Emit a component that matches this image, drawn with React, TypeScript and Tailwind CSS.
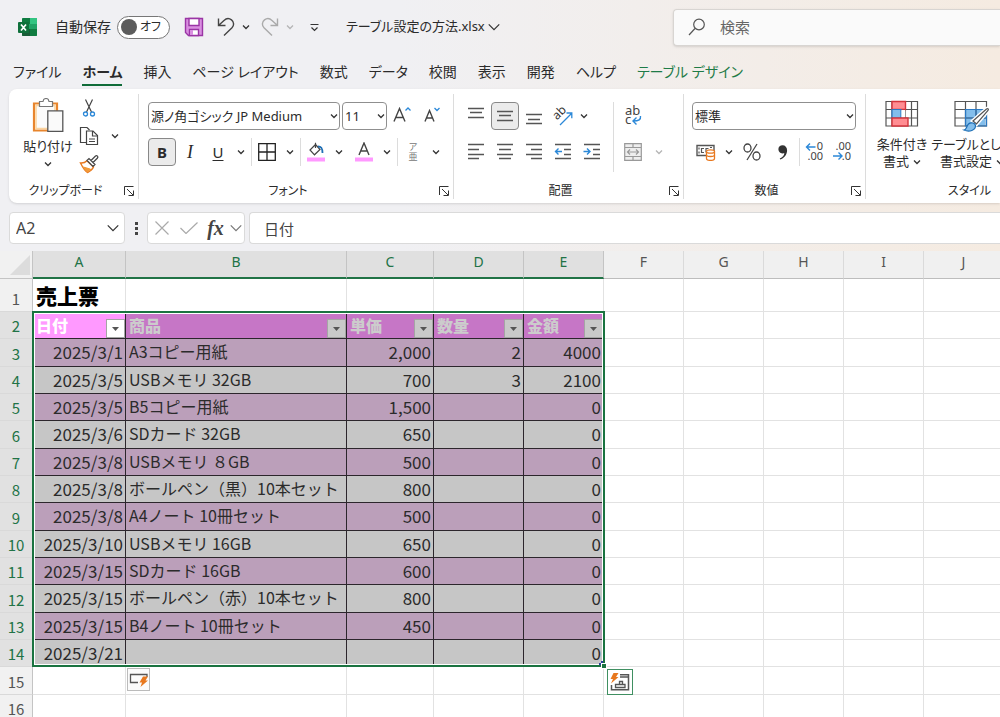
import React from "react";

type Kids = { children?: React.ReactNode };

function Chevron({ size = 8, className = "text-[#333]" }: { size?: number; className?: string }) {
  return (
    <svg width={size} height={size} viewBox="0 0 8 8" fill="none" className={className} aria-hidden="true">
      <path d="M1 2.5 4 5.5 7 2.5" stroke="currentColor" strokeWidth={size > 8 ? 0.7 : 1.3} />
    </svg>
  );
}

function IconButton({ label, className = "w-7", children }: Kids & { label: string; className?: string }) {
  return (
    <button type="button" aria-label={label} className={`flex h-7 shrink-0 items-center justify-center rounded ${className}`}>
      {children}
    </button>
  );
}

function MenuButton({ label, className = "w-[18px]", muted = false }: { label: string; className?: string; muted?: boolean }) {
  return (
    <IconButton label={label} className={className}>
      <Chevron className={muted ? "text-[#b5b5b5]" : "text-[#333]"} />
    </IconButton>
  );
}

function Separator({ className = "h-7" }: { className?: string }) {
  return <div className={`mx-px w-px shrink-0 bg-[#dcdcdc] ${className}`} />;
}

function Launcher({ label }: { label: string }) {
  return (
    <button type="button" aria-label={label} className="absolute right-1 bottom-0 flex h-4 w-2.5 items-center">
      <svg width="10" height="10" viewBox="0 0 10 10" fill="none" stroke="#333">
        <path d="M.5 9V.5H9.5M3 3l6 6M9.5 4.5v5h-5" />
      </svg>
    </button>
  );
}

function Group({ title, className, launcher = true, children }: Kids & { title: string; className: string; launcher?: boolean }) {
  return (
    <section aria-label={title} className={`flex shrink-0 flex-col border-r border-[#dcdcdc] ${className}`}>
      <div className="h-[89px]">{children}</div>
      <div className={`relative h-4 text-center text-xs leading-4 ${launcher ? "pr-4" : ""}`}>
        {title}
        {launcher && <Launcher label={`${title}の設定`} />}
      </div>
    </section>
  );
}

function Select({ label, value, className }: { label: string; value: string; className: string }) {
  return (
    <div className={`relative h-7 shrink-0 ${className}`}>
      <select aria-label={label} className="h-full w-full appearance-none rounded border border-[#8f8f8f] bg-white pr-4 pl-0.5 text-[13px] leading-5">
        <option>{value}</option>
      </select>
      <span className="pointer-events-none absolute inset-y-0 right-0.5 flex items-center">
        <Chevron />
      </span>
    </div>
  );
}

function Lines({ rows, children }: Kids & { rows: [number, number, number][] }) {
  return (
    <svg width="18" height="18" viewBox="0 0 18 18" fill="none" aria-hidden="true">
      {rows.map(([x1, x2, y]) => (
        <path key={y} d={`M${x1} ${y}.5H${x2}`} stroke="#555" strokeWidth="1.3" />
      ))}
      {children}
    </svg>
  );
}

function ExcelLogo() {
  return (
    <svg width="20" height="20" viewBox="0 0 20 20" aria-label="Excel" role="img">
      <rect x="4" y="1" width="15" height="18" rx="1" fill="#21a366" />
      <path d="M5 1h7v6H4V2z" fill="#107c41" />
      <path d="M12 1h6a1 1 0 0 1 1 1v5h-7z" fill="#33c481" />
      <path d="M12 12h7v6a1 1 0 0 1-1 1h-6z" fill="#107c41" />
      <path d="M4 12h8v7H5a1 1 0 0 1-1-1z" fill="#185c37" />
      <rect x="0" y="5" width="11" height="11" rx="1" fill="#0f703b" />
      <path d="M3 7.5l5 6M8 7.5l-5 6" stroke="#fff" strokeWidth="1.7" />
    </svg>
  );
}

function SaveIcon() {
  return (
    <svg width="20" height="20" viewBox="0 0 20 20" aria-hidden="true">
      <path d="M1.5 1.5h17v17h-14l-3-3z" fill="#d98fe0" stroke="#9a35a5" strokeWidth="1.4" />
      <path d="M5 1.5h10v7H5z" fill="#fff" stroke="#9a35a5" strokeWidth="1.4" />
      <path d="M5.500 18.500v-6h9v6z" fill="#fff" stroke="#9a35a5" strokeWidth="1.4" />
      <path d="M6 13h3v5H6z" fill="#d98fe0" />
    </svg>
  );
}

function UndoIcon() {
  return (
    <svg width="18" height="20" viewBox="0 0 18 20" fill="none" stroke="currentColor" strokeWidth="1.4" aria-hidden="true">
      <path d="M1.500 1.500v7h7M1.500 8.500 7 3.400C9.300 1.300 12.300 1.200 14.500 2.900c2.800 2.300 2.600 5.700.5 7.900L7 18.500" />
    </svg>
  );
}

function PasteIcon() {
  return (
    <svg width="32" height="34" viewBox="0 0 32 34" fill="none" aria-hidden="true">
      <path d="M2 5.500h23v27H2z" fill="#fff" stroke="#e8852d" strokeWidth="2.200" />
      <path d="M4 7.500h19v23H4z" fill="#fbfbfb" stroke="#fbd49e" strokeWidth="1.500" />
      <path d="M7.500 8.500v-5h3.500c.6-4 5.500-4 6 0h3.500v5z" fill="#fff" stroke="#777" strokeWidth="1.200" />
      <path d="M15.800 12.800h15v20.500h-15z" fill="#fafafa" stroke="#555" strokeWidth="1.300" />
    </svg>
  );
}

function CutIcon() {
  return (
    <svg width="14" height="20" viewBox="0 0 14 20" fill="none" aria-hidden="true">
      <path d="M3.500 1.500 9.500 14M10.500 1.500 4.500 14" stroke="#444" strokeWidth="1.200" />
      <circle cx="3.500" cy="16" r="2" stroke="#2b88d8" strokeWidth="1.300" />
      <circle cx="10.500" cy="16" r="2" stroke="#2b88d8" strokeWidth="1.300" />
    </svg>
  );
}

function CopyIcon() {
  return (
    <svg width="20" height="20" viewBox="0 0 20 20" fill="none" stroke="#444" strokeWidth="1.200" aria-hidden="true">
      <path d="M7 16.500H1.500v-15H8l2.500 2.500" />
      <path d="M7.500 5h6.500l4.500 4.500v9h-11z" fill="#fff" />
      <path d="M13.500 5v5h5M10 13h6M10 15.500h6" />
    </svg>
  );
}

function PainterIcon() {
  return (
    <svg width="20" height="20" viewBox="0 0 20 20" fill="none" aria-hidden="true">
      <path d="M1.500 9c3 .3 5-.8 6.500-2.300l6.500 6.300c-1 2.300-3 4-6 5.500C6 17 3.500 13 1.500 9z" fill="#fff" stroke="#e8781e" strokeWidth="1.400" />
      <path d="M3.500 12.500c4 1 6.500 1 9 3l-4 3C6.500 17 5 15 3.500 12.500z" fill="#f29a38" />
      <path d="M8 6.500 10 4.500l6 6-2 2zM12 6.500l4.500-4.500c1.500-1 3 .5 2 2L14 8.500" fill="#fff" stroke="#444" strokeWidth="1.200" />
    </svg>
  );
}

function BordersIcon() {
  return (
    <svg width="18" height="18" viewBox="0 0 18 18" fill="none" stroke="#222" strokeWidth="1.300" aria-hidden="true">
      <path d="M.7.7h16.600v16.600H.7zM9 .7v16.600M.7 9h16.600" />
    </svg>
  );
}

function FillIcon() {
  return (
    <svg width="18" height="20" viewBox="0 0 18 20" fill="none" aria-hidden="true">
      <path d="M8.500 2.500 3 8l4.500 4.800L13 7.500 8.500 2.500V.8M8.500 1v5" stroke="#444" strokeWidth="1.200" />
      <path d="M11 4.500c3 0 4.500 1.200 4.500 6.500" stroke="#1f6fb5" strokeWidth="1.800" />
      <path d="M0 15.500h18v4H0z" fill="#ff99ff" />
    </svg>
  );
}

function FontColorIcon() {
  return (
    <svg width="18" height="20" viewBox="0 0 18 20" fill="none" aria-hidden="true">
      <path d="M4 13 9 1l5 12M5.700 9h6.600" stroke="#444" strokeWidth="1.400" />
      <path d="M0 15.500h18v4H0z" fill="#ff99ff" />
    </svg>
  );
}

function OrientationIcon() {
  return (
    <svg width="20" height="20" viewBox="0 0 20 20" fill="none" aria-hidden="true" className="overflow-visible">
      <text x="3" y="14" transform="rotate(-45 4 13)" fill="#333" className="font-['Noto_Sans',sans-serif] text-[12px]">ab</text>
      <path d="M7 19 18.500 7.500M13.500 7h5.300v5.300" stroke="#2b88d8" strokeWidth="1.300" />
    </svg>
  );
}

function WrapIcon() {
  return (
    <svg width="20" height="22" viewBox="0 0 20 22" fill="none" aria-hidden="true" className="overflow-visible">
      <text x="2" y="10" fill="#444" className="font-['Noto_Sans',sans-serif] text-[13px]">ab</text>
      <text x="2" y="19" fill="#444" className="font-['Noto_Sans',sans-serif] text-[13px]">c</text>
      <path d="M17.500 11c.5 3.500-1.500 5-7.500 5M13.500 12.500 10 16l3.500 3.500" stroke="#2b88d8" strokeWidth="1.400" />
    </svg>
  );
}

function MergeIcon() {
  return (
    <svg width="18" height="18" viewBox="0 0 18 18" fill="#eee" stroke="#999" strokeWidth="1.200" aria-hidden="true">
      <path d="M.7.7h16.600v16.600H.7zM.7 4.500h16.600M.7 13.500h16.600M9 .7v3.800M9 13.500v3.800M3.500 9h11M6 6.500 3.500 9 6 11.500M12 6.500 14.500 9 12 11.500" />
    </svg>
  );
}

function CurrencyIcon() {
  return (
    <svg width="20" height="18" viewBox="0 0 20 18" fill="none" aria-hidden="true">
      <path d="M1 2.500h17v10H1z" stroke="#555" strokeWidth="1.400" />
      <path d="M3 4.500v2M3 8.500v2M8 5.500H5.500v4H8M12.500 5.500H10v4M14 4.500h2" stroke="#555" strokeWidth="1.200" />
      <path d="M10.500 8.500v7c0 2.500 8 2.500 8 0v-7" fill="#fff" stroke="#e8781e" strokeWidth="1.300" />
      <ellipse cx="14.500" cy="8.500" rx="4" ry="1.700" fill="#fff" stroke="#e8781e" strokeWidth="1.300" />
      <path d="M10.500 12c0 2 8 2 8 0" stroke="#e8781e" strokeWidth="1.300" />
    </svg>
  );
}

function DecimalIcon({ more }: { more: boolean }) {
  return (
    <svg width="20" height="20" viewBox="0 0 20 20" fill="none" aria-hidden="true" className="overflow-visible">
      <text x="18" y="8" textAnchor="end" fill="#444" className="font-['Noto_Sans',sans-serif] text-[11px]">{more ? "0" : ".00"}</text>
      <text x="18" y="18" textAnchor="end" fill="#444" className="font-['Noto_Sans',sans-serif] text-[11px]">{more ? ".00" : ".0"}</text>
      {more ? (
        <path d="M10.500 5H1.500M5 1.500 1.500 5 5 8.500" stroke="#2b88d8" strokeWidth="1.400" />
      ) : (
        <path d="M0 14h9M5.500 10.500 9 14l-3.500 3.500" stroke="#2b88d8" strokeWidth="1.400" />
      )}
    </svg>
  );
}

function ConditionalIcon() {
  return (
    <svg width="34" height="28" viewBox="0 0 34 28" fill="none" aria-hidden="true">
      <path d="M1 1.500h31.500v24.500H1zM1 9.500h31.500M1 18h31.500M7 1.500V26M20 1.500V26M26.500 1.500V26" stroke="#555" strokeWidth="1.200" />
      <path d="M7 1.500h13.500v8H7z" fill="#ff8d92" stroke="#d3343c" strokeWidth="1.400" />
      <path d="M7 9.500h9V18H7z" fill="#83beec" stroke="#2b78c2" strokeWidth="1.200" />
      <path d="M16.500 10H20v7.500h-3.500z" fill="#fff" />
      <path d="M7 18h16v8H7z" fill="#ff8d92" stroke="#d3343c" strokeWidth="1.400" />
    </svg>
  );
}

function TableFormatIcon() {
  return (
    <svg width="36" height="32" viewBox="0 0 36 32" fill="none" aria-hidden="true">
      <path d="M11.500 9.500h20v16.500h-20z" fill="#83beec" />
      <path d="M1 1.500h31.500v24.500H1zM1 9.500h31.500M1 18h31.500M11.500 1.500V26M22 1.500V26" stroke="#555" strokeWidth="1.200" />
      <path d="M11.500 9.500h21V26h-21zM11.500 18h21M22 9.500V26" stroke="#2b78c2" strokeWidth="1.200" />
      <path d="M19 21 32.500 9c1.500-1 2.500 0 1.500 1.500L22.500 24z" fill="#fff" stroke="#fff" strokeWidth="4" />
      <path d="M19 21 32.500 9c1.500-1 2.500 0 1.500 1.500L22.500 24z" fill="#fff" stroke="#555" strokeWidth="1.200" />
      <path d="M10 30c3-.5 2-3.500 4.500-6 2.500-2.300 7-1 7 2 0 4-6 6.500-11.500 4z" fill="#83beec" stroke="#1f6fb5" strokeWidth="1.200" />
    </svg>
  );
}

const tabs = ["ファイル", "ホーム", "挿入", "ページ レイアウト", "数式", "データ", "校閲", "表示", "開発", "ヘルプ", "テーブル デザイン"];

function TitleBar() {
  return (
    <header className="flex h-[54px] items-center">
      <div className="flex w-[673px] shrink-0 items-center pl-[18px]">
        <ExcelLogo />
        <span id="autosave" className="w-[79px] pl-[17px] text-sm">自動保存</span>
        <button type="button" role="switch" aria-checked="false" aria-labelledby="autosave" className="flex h-[23px] w-[53px] items-center justify-between rounded-full border border-[#777] bg-white pr-2 pl-[3px] text-xs">
          <span className="size-4 rounded-full bg-[#5c5c5c]" />
          オフ
        </button>
        <div className="flex items-center pl-2 text-[#444]">
          <IconButton label="上書き保存" className="w-8"><SaveIcon /></IconButton>
          <IconButton label="元に戻す" className="w-8"><UndoIcon /></IconButton>
          <MenuButton label="元に戻す履歴" className="w-2" />
          <IconButton label="やり直し" className="w-9 pl-1 text-[#aaa]">
            <span className="-scale-x-100"><UndoIcon /></span>
          </IconButton>
          <MenuButton label="やり直し履歴" className="w-2" muted />
          <IconButton label="クイック アクセス ツール バーのカスタマイズ" className="w-10">
            <svg width="9" height="9" viewBox="0 0 9 9" fill="none" stroke="#333" strokeWidth="1.200"><path d="M.5 1.500h8M1.500 4.500l3 3 3-3" /></svg>
          </IconButton>
        </div>
        <button type="button" className="flex items-center gap-0.5 pl-3 text-[13px] whitespace-nowrap">
          テーブル設定の方法.xlsx
          <Chevron size={14} />
        </button>
      </div>
      <label className="flex h-[37px] min-w-0 flex-1 items-center gap-3.5 rounded-l border border-r-0 border-[#d8d5d2] bg-[#fafafa] pl-3.5 shadow-sm">
        <svg width="18" height="18" viewBox="0 0 18 18" fill="none" stroke="#555" strokeWidth="1.200"><circle cx="11" cy="6.500" r="5.300" /><path d="M7 10.500 1 17" /></svg>
        <input type="search" aria-label="検索" placeholder="検索" className="min-w-0 flex-1 bg-transparent text-[15px] outline-none placeholder:text-[#666]" />
      </label>
    </header>
  );
}

function TabStrip() {
  return (
    <nav className="flex h-[35px] gap-[21px] pl-[13px] text-sm leading-5 whitespace-nowrap">
      {tabs.map((tab) => (
        <a key={tab} href="#" className={`relative pt-2 ${tab === "ホーム" ? "font-bold" : ""} ${tab === "テーブル デザイン" ? "text-[#1e7b47]" : ""}`}>
          {tab}
          {tab === "ホーム" && <span className="absolute inset-x-0 bottom-[3px] h-0.5 bg-[#0f6b38]" />}
        </a>
      ))}
    </nav>
  );
}

function Ribbon() {
  return (
    <div className="ml-[9px] flex overflow-hidden rounded-l-lg bg-white pt-[5px] pb-1 shadow">
      <Group title="クリップボード" className="w-[130px]">
        <div className="flex items-start pl-2.5">
          <button type="button" className="flex w-[58px] flex-col items-center gap-1 pt-1 text-[13px] leading-5 whitespace-nowrap">
            <PasteIcon />
            貼り付け
            <Chevron />
          </button>
          <div className="flex flex-col">
            <IconButton label="切り取り" className="w-6"><CutIcon /></IconButton>
            <IconButton label="コピー" className="w-6"><CopyIcon /></IconButton>
            <IconButton label="書式のコピー" className="w-6"><PainterIcon /></IconButton>
          </div>
          <div className="flex self-center"><MenuButton label="コピーのオプション" className="w-7" /></div>
        </div>
      </Group>

      <Group title="フォント" className="w-[315px]">
        <div className="flex flex-col gap-2 pt-2 pl-[9px]">
          <div className="flex gap-0.5">
            <Select label="フォント名" value="源ノ角ゴシック JP Medium" className="w-[192px]" />
            <Select label="フォント サイズ" value="11" className="w-[45px]" />
            <IconButton label="フォント サイズの拡大">
              <svg width="20" height="20" viewBox="0 0 20 20" fill="none"><path d="M1 15.500 6.500 2.500 12 15.500M2.800 11.500h7.400" stroke="#444" strokeWidth="1.400" /><path d="M12.500 4.500 15 2l2.500 2.500" stroke="#2b88d8" strokeWidth="1.300" /></svg>
            </IconButton>
            <IconButton label="フォント サイズの縮小">
              <svg width="20" height="20" viewBox="0 0 20 20" fill="none"><path d="M2 15.500 6.500 4.500 11 15.500M3.500 12h6" stroke="#444" strokeWidth="1.400" /><path d="M11.500 2 14 4.500 16.500 2" stroke="#2b88d8" strokeWidth="1.300" /></svg>
            </IconButton>
          </div>
          <div className="flex">
            <IconButton label="太字" className="w-7 border border-[#888] bg-[#ebebeb] text-[15px] font-bold">B</IconButton>
            <IconButton label="斜体"><span className="font-['Liberation_Serif',serif] text-lg italic">I</span></IconButton>
            <IconButton label="下線"><span className="text-[15px] underline underline-offset-2">U</span></IconButton>
            <MenuButton label="下線の種類" />
            <Separator />
            <IconButton label="罫線"><BordersIcon /></IconButton>
            <MenuButton label="罫線の種類" />
            <Separator />
            <IconButton label="塗りつぶしの色"><FillIcon /></IconButton>
            <MenuButton label="塗りつぶしの色の選択" />
            <div className="flex pl-0.5">
              <IconButton label="フォントの色"><FontColorIcon /></IconButton>
              <MenuButton label="フォントの色の選択" />
            </div>
            <Separator />
            <IconButton label="ふりがな"><span className="text-[9px] leading-[10px] text-[#777]">ア<br />亜</span></IconButton>
            <MenuButton label="ふりがなの設定" />
          </div>
        </div>
      </Group>

      <Group title="配置" className="w-[230px]">
        <div className="flex pt-2 pl-2">
          <div className="flex w-[150px] flex-col gap-2">
            <div className="flex gap-px">
              <IconButton label="上揃え"><Lines rows={[[1, 17, 1], [3, 15, 5], [1, 17, 10]]} /></IconButton>
              <IconButton label="上下中央揃え" className="w-7 border border-[#888] bg-[#ebebeb]"><Lines rows={[[1, 17, 4], [3, 15, 8], [1, 17, 13]]} /></IconButton>
              <IconButton label="下揃え"><Lines rows={[[1, 17, 7], [3, 15, 12], [1, 17, 16]]} /></IconButton>
              <IconButton label="方向"><OrientationIcon /></IconButton>
              <MenuButton label="方向の選択" className="w-3" />
            </div>
            <div className="flex gap-px">
              <IconButton label="左揃え"><Lines rows={[[1, 17, 1], [1, 12, 6], [1, 17, 11], [1, 12, 15]]} /></IconButton>
              <IconButton label="中央揃え"><Lines rows={[[1, 17, 1], [3, 15, 6], [1, 17, 11], [3, 15, 15]]} /></IconButton>
              <IconButton label="右揃え"><Lines rows={[[1, 17, 1], [6, 17, 6], [1, 17, 11], [6, 17, 15]]} /></IconButton>
              <IconButton label="インデントを減らす">
                <Lines rows={[[1, 17, 1], [10, 17, 6], [10, 17, 11], [1, 17, 15]]}><path d="M8 8.500H1.500M4.500 5.500l-3 3 3 3" stroke="#2b88d8" strokeWidth="1.400" /></Lines>
              </IconButton>
              <IconButton label="インデントを増やす">
                <Lines rows={[[1, 17, 1], [10, 17, 6], [10, 17, 11], [1, 17, 15]]}><path d="M.5 8.500H7M4 5.500l3 3-3 3" stroke="#2b88d8" strokeWidth="1.400" /></Lines>
              </IconButton>
            </div>
          </div>
          <Separator className="h-[70px]" />
          <div className="flex flex-col gap-2 pl-1">
            <IconButton label="折り返して全体を表示する"><WrapIcon /></IconButton>
            <div className="flex">
              <IconButton label="セルを結合して中央揃え"><MergeIcon /></IconButton>
              <MenuButton label="セルの結合" className="w-6" muted />
            </div>
          </div>
        </div>
      </Group>

      <Group title="数値" className="w-[182px]">
        <div className="flex flex-col gap-2 pt-2 pl-2">
          <Select label="数値の書式" value="標準" className="w-[164px]" />
          <div className="flex">
            <IconButton label="通貨表示形式"><CurrencyIcon /></IconButton>
            <MenuButton label="通貨の選択" />
            <IconButton label="パーセント スタイル">
              <svg width="18" height="18" viewBox="0 0 18 18" fill="none" stroke="#444" strokeWidth="1.300"><ellipse cx="4.500" cy="5" rx="3.500" ry="4" /><ellipse cx="13.500" cy="13" rx="3.500" ry="4" /><path d="M14 1 4 17" /></svg>
            </IconButton>
            <IconButton label="桁区切りスタイル" className="w-8">
              <svg width="11" height="15" viewBox="0 0 12 16" fill="#333"><path d="M6 0a4.500 4.500 0 1 1-1 8.900C4 8.800 1.500 7.500 1.500 4.500A4.500 4.500 0 0 1 6 0c3 0 5 2.200 5 5.500 0 5-3.500 9-7.500 10l-.5-1C6 13.300 8 11 8 8.500z" /></svg>
            </IconButton>
            <Separator />
            <IconButton label="小数点以下の表示桁数を増やす"><DecimalIcon more /></IconButton>
            <IconButton label="小数点以下の表示桁数を減らす"><DecimalIcon more={false} /></IconButton>
          </div>
        </div>
      </Group>

      <Group title="スタイル" className="w-[208px]" launcher={false}>
        <div className="flex gap-1 pt-1.5 pl-2 text-[13px] leading-[17px] whitespace-nowrap">
          <button type="button" className="flex w-[56px] flex-col items-center">
            <span className="flex h-9"><ConditionalIcon /></span>
            <span>条件付き</span>
            <span className="flex items-center gap-1">書式<Chevron /></span>
          </button>
          <button type="button" className="flex w-[76px] flex-col items-center">
            <span className="flex h-9"><TableFormatIcon /></span>
            <span>テーブルとして</span>
            <span className="flex items-center gap-1">書式設定<Chevron /></span>
          </button>
        </div>
      </Group>
    </div>
  );
}

function FormulaBar() {
  return (
    <div className="flex h-12 items-center pt-0.5 pl-[9px]">
      <div className="flex h-8 w-[116px] shrink-0 items-center rounded border border-[#dadada] bg-white">
        <input aria-label="名前ボックス" defaultValue="A2" className="min-w-0 flex-1 bg-transparent pl-1.5 text-base text-[#444] outline-none" />
        <button type="button" aria-label="名前の一覧" className="px-1"><Chevron size={14} /></button>
      </div>
      <div className="flex w-[22px] shrink-0 flex-col items-center gap-0.5">
        <span className="size-[3px] bg-[#444]" />
        <span className="size-[3px] bg-[#444]" />
        <span className="size-[3px] bg-[#444]" />
      </div>
      <div className="flex h-8 w-[98px] shrink-0 items-center rounded border border-[#dadada] bg-white">
        <IconButton label="キャンセル"><svg width="14" height="14" viewBox="0 0 14 14" stroke="#aaa" strokeWidth="1.200"><path d="M.5.5l13 13M13.500.5l-13 13" /></svg></IconButton>
        <IconButton label="入力" className="w-[26px]"><svg width="18" height="12" viewBox="0 0 18 12" fill="none" stroke="#aaa" strokeWidth="1.200"><path d="M.5 6 6 11.500 17.500.5" /></svg></IconButton>
        <IconButton label="関数の挿入" className="w-[27px]"><span className="font-['Liberation_Serif',serif] text-xl font-bold text-[#444] italic">fx</span></IconButton>
        <button type="button" aria-label="関数の一覧"><Chevron size={14} className="text-[#777]" /></button>
      </div>
      <input aria-label="数式バー" defaultValue="日付" className="ml-1 h-8 min-w-0 flex-1 rounded-l border border-r-0 border-[#dadada] bg-white pl-3.5 text-[15px] text-[#444] outline-none" />
    </div>
  );
}

const columns = ["A", "B", "C", "D", "E", "F", "G", "H", "I", "J"];
const emptyColumns = columns.slice(5);
const headings = ["日付", "商品", "単価", "数量", "金額"];
const records = [
  ["2025/3/1", "A3コピー用紙", "2,000", "2", "4000"],
  ["2025/3/5", "USBメモリ 32GB", "700", "3", "2100"],
  ["2025/3/5", "B5コピー用紙", "1,500", "", "0"],
  ["2025/3/6", "SDカード 32GB", "650", "", "0"],
  ["2025/3/8", "USBメモリ ８GB", "500", "", "0"],
  ["2025/3/8", "ボールペン（黒）10本セット", "800", "", "0"],
  ["2025/3/8", "A4ノート 10冊セット", "500", "", "0"],
  ["2025/3/10", "USBメモリ 16GB", "650", "", "0"],
  ["2025/3/15", "SDカード 16GB", "600", "", "0"],
  ["2025/3/15", "ボールペン（赤）10本セット", "800", "", "0"],
  ["2025/3/15", "B4ノート 10冊セット", "450", "", "0"],
  ["2025/3/21", "", "", "", "0"],
];

const gridCell = "border-r border-b border-[#e2e2e2] bg-white p-0";

function RowHeader({ n, selected = false }: { n: number; selected?: boolean }) {
  return (
    <th scope="row" className={`border-r border-b border-r-[#c4c4c4] border-b-[#d9d9d9] p-0 align-bottom text-[15px] leading-6 font-normal ${selected ? "bg-[#e1e1e1] text-[#217346]" : "bg-[#f1f1f1] text-[#555]"}`}>
      {n}
    </th>
  );
}

function EmptyCells() {
  return <>{emptyColumns.map((c) => <td key={c} className={gridCell} />)}</>;
}

function Sheet() {
  return (
    <main className="relative bg-white font-['Noto_Sans_CJK_JP',sans-serif]">
      <table className="w-full min-w-[1004px] table-fixed border-separate border-spacing-0 [&_tbody_tr]:h-[27px] [&_tbody_tr:first-child]:h-[33px] [&_tbody_tr:nth-child(3n)]:h-7">
        <colgroup>
          <col className="w-[33px]" />
          <col className="w-[93px]" />
          <col className="w-[221px]" />
          <col className="w-[87px]" />
          <col className="w-[90px]" />
          <col className="w-20" />
          <col className="w-20" />
          <col className="w-20" />
          <col className="w-20" />
          <col className="w-20" />
          <col />
        </colgroup>
        <thead className="font-['Noto_Sans',sans-serif]">
          <tr className="h-7">
            <th className="border-r border-b border-[#c4c4c4] bg-[#f1f1f1] p-0">
              <svg width="20" height="20" viewBox="0 0 20 20" className="ml-2.5" aria-label="すべて選択"><path d="M20 0v20H0z" fill="#dcdcdc" /></svg>
            </th>
            {columns.map((c, i) => (
              <th key={c} scope="col" className={`border-r p-0 align-top text-sm leading-[21px] font-normal ${i < 5 ? "border-b-2 border-r-[#c4c4c4] border-b-[#217346] bg-[#e0e0e0] text-[#217346]" : "border-b border-r-[#dadada] border-b-[#bdbdbd] bg-[#f0f0f0] text-[#555]"}`}>
                {c}
              </th>
            ))}
          </tr>
        </thead>
        <tbody>
          <tr>
            <RowHeader n={1} />
            <td className={`${gridCell} pl-[3px] text-[21px] leading-8 font-black whitespace-nowrap text-black`}>売上票</td>
            {columns.slice(1, 5).map((c) => <td key={c} className={gridCell} />)}
            <EmptyCells />
          </tr>
          <tr>
            <RowHeader n={2} selected />
            {headings.map((h, i) => (
              <td key={h} className={`border-r border-b border-[#2c262c] p-0 ${i === 0 ? "bg-[#ff99ff] text-white" : "bg-[#c676c6] text-[#cccccc]"}`}>
                <div className="flex h-[26px] items-end justify-between pl-[3px]">
                  <span className="text-base leading-[26px] font-black">{h}</span>
                  <button type="button" aria-label={`${h}のフィルター`} className={`flex size-[19px] items-center justify-center border border-[#a5a5a5] ${i === 0 ? "bg-white" : "bg-[#c9c9c9]"}`}>
                    <svg width="7" height="4" viewBox="0 0 7 4"><path d="M0 0h7L3.500 4z" fill="#555" /></svg>
                  </button>
                </div>
              </td>
            ))}
            <EmptyCells />
          </tr>
          {records.map((record, r) => (
            <tr key={r}>
              <RowHeader n={r + 3} selected />
              {record.map((value, i) => (
                <td key={i} className={`overflow-hidden border-r border-b border-[#2c262c] p-0 align-top leading-[25px] whitespace-nowrap text-[#2b2b2b] ${r % 2 === 0 ? "bg-[#bb9fba]" : "bg-[#c6c6c6]"} ${i === 1 ? "pl-[3px] text-base" : "pr-0.5 text-right text-[17px]"}`}>
                  {value}
                </td>
              ))}
              <EmptyCells />
            </tr>
          ))}
          {[15, 16, 17].map((n) => (
            <tr key={n}>
              <RowHeader n={n} />
              {columns.map((c) => <td key={c} className={gridCell} />)}
            </tr>
          ))}
        </tbody>
      </table>

      <div className="pointer-events-none absolute top-[60px] left-[32px] h-[356px] w-[573px] border-2 border-[#1a7340] ring-1 ring-white ring-inset">
        <span className="absolute right-0 bottom-0 size-1 border-r-2 border-b-2 border-[#2b3f9e]" />
        <span className="absolute -right-1 -bottom-1 size-1.5 border border-white bg-[#1a7340]" />
      </div>
      <button type="button" aria-label="オートコレクトのオプション" className="absolute top-[417px] left-[127px] flex size-[23px] items-center justify-center border border-[#bbb] bg-[#fbfbfb]">
        <svg width="20" height="16" viewBox="0 0 20 16" fill="none"><path d="M9 10.500H1.500v-8H18V5" stroke="#555" strokeWidth="1.300" /><path d="M14 4.500h5l-2.500 4H19L11.500 15l1.500-4.500h-2.500z" fill="#e8781e" /></svg>
      </button>
      <button type="button" aria-label="クイック分析" className="absolute top-[418px] left-[607px] flex size-[26px] items-center justify-center border border-[#3f8f61] bg-white">
        <svg width="20" height="18" viewBox="0 0 20 18" fill="none"><path d="M10 1.800h8.500v15h-17V12M10 4h8" stroke="#555" strokeWidth="1.500" /><path d="M5.500 11.500H15v3H5.500zM9.500 11.500v-3h3v3" stroke="#555" strokeWidth="1.300" /><path d="M3.500 0h5L6 4h2.500L1 10.500 3 6H.500z" fill="#e8781e" /></svg>
      </button>
    </main>
  );
}

export default function App() {
  return (
    <div className="h-screen overflow-hidden bg-linear-to-r from-[#f0f0f3] from-40% to-[#f5ebe1] font-['Noto_Sans','Noto_Sans_CJK_JP',sans-serif] text-[#2b2b2b]">
      <div className="[font-feature-settings:'palt']">
        <TitleBar />
        <TabStrip />
        <Ribbon />
        <FormulaBar />
      </div>
      <Sheet />
    </div>
  );
}
